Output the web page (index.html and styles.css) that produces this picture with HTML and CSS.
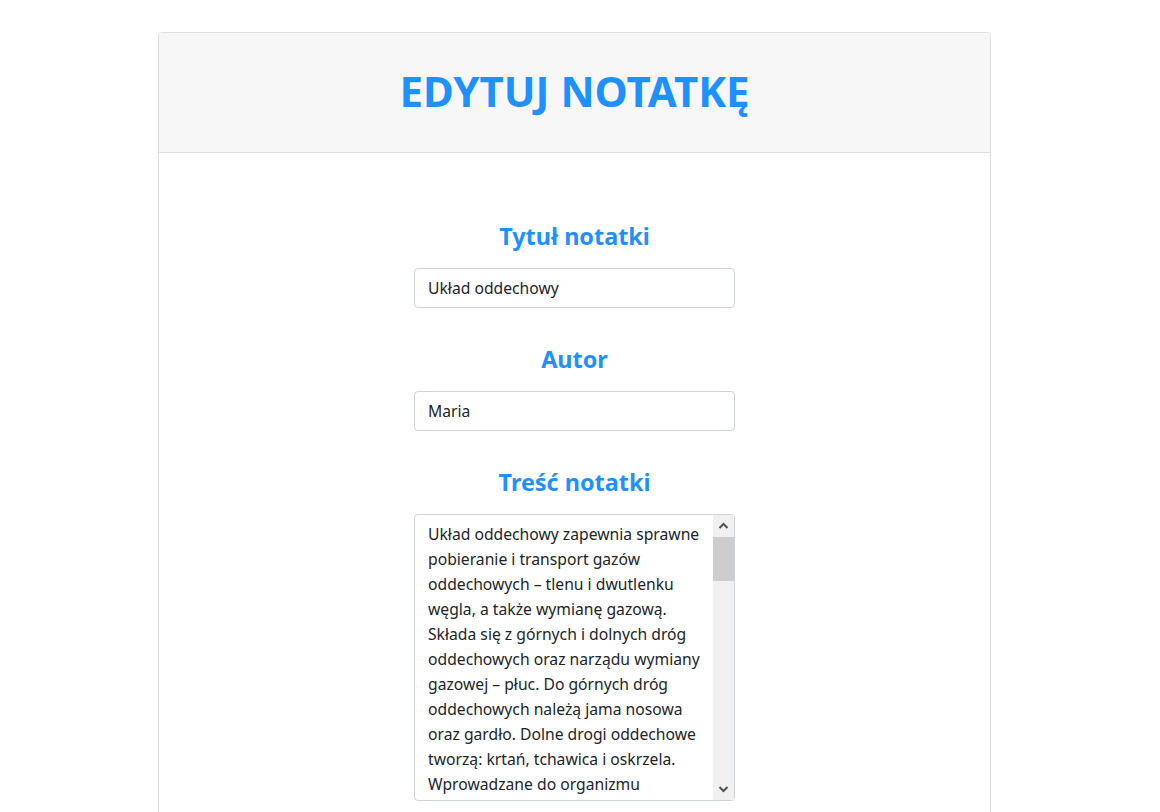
FILE: index.html
```html
<!DOCTYPE html>
<html lang="pl">
<head>
<meta charset="utf-8">
<title>Edytuj notatkę</title>
<link rel="stylesheet" href="styles.css">
</head>
<body>
<div class="page">
  <div class="card">
    <div class="card-header">
      <h1 class="title">EDYTUJ NOTATKĘ</h1>
    </div>
    <form class="card-body">
      <div class="group">
        <label class="label" for="title">Tytuł notatki</label>
        <input class="field" id="title" type="text" value="Układ oddechowy">
      </div>
      <div class="group">
        <label class="label" for="author">Autor</label>
        <input class="field" id="author" type="text" value="Maria">
      </div>
      <div class="group">
        <label class="label" for="content">Treść notatki</label>
        <div class="area-wrap">
          <textarea class="field area" id="content">Układ oddechowy zapewnia sprawne
pobieranie i transport gazów
oddechowych – tlenu i dwutlenku
węgla, a także wymianę gazową.
Składa się z górnych i dolnych dróg
oddechowych oraz narządu wymiany
gazowej – płuc. Do górnych dróg
oddechowych należą jama nosowa
oraz gardło. Dolne drogi oddechowe
tworzą: krtań, tchawica i oskrzela.
Wprowadzane do organizmu
powietrze jest w drogach oddechowych oczyszczane, ogrzewane i nawilżane. W jamie nosowej znajdują się włoski oraz nabłonek migawkowy, który wychwytuje drobiny kurzu i mikroorganizmy. Gardło jest wspólnym odcinkiem układu oddechowego i pokarmowego. Krtań zbudowana jest z chrząstek, a w jej wnętrzu znajdują się fałdy głosowe, dzięki którym możemy wydawać dźwięki. Wejście do krtani zamyka nagłośnia, która chroni drogi oddechowe przed dostaniem się do nich pokarmu podczas połykania. Tchawica to rura o długości około 10–12 cm, której ściany wzmocnione są chrzęstnymi półpierścieniami. Na wysokości piątego kręgu piersiowego tchawica dzieli się na dwa oskrzela główne – prawe i lewe. Oskrzela rozgałęziają się wewnątrz płuc na coraz drobniejsze oskrzeliki, które zakończone są pęcherzykami płucnymi. To właśnie w pęcherzykach płucnych zachodzi wymiana gazowa. Ściany pęcherzyków są bardzo cienkie i oplecione gęstą siecią naczyń włosowatych. Tlen dyfunduje z powietrza do krwi, a dwutlenek węgla przechodzi z krwi do powietrza w pęcherzykach. Płuca znajdują się w klatce piersiowej i otoczone są dwiema błonami – opłucną płucną i opłucną ścienną. Między nimi znajduje się jama opłucnej wypełniona niewielką ilością płynu, który zmniejsza tarcie podczas ruchów oddechowych. Prawe płuco składa się z trzech płatów, a lewe z dwóch. Wentylacja płuc polega na naprzemiennym wdechu i wydechu. Podczas wdechu przepona kurczy się i obniża, a mięśnie międzyżebrowe unoszą żebra, dzięki czemu objętość klatki piersiowej się zwiększa i powietrze napływa do płuc. Podczas wydechu mięśnie rozkurczają się, klatka piersiowa zmniejsza swoją objętość, a powietrze zostaje wypchnięte na zewnątrz.</textarea>
          <div class="scrollbar" aria-hidden="true">
            <div class="sb-btn">
              <svg width="21" height="22" viewBox="0 0 21 22"><path d="M6.5 13 L10.5 9 L14.5 13" fill="none" stroke="#505050" stroke-width="2"/></svg>
            </div>
            <div class="sb-thumb"></div>
            <div class="sb-track"></div>
            <div class="sb-btn">
              <svg width="21" height="22" viewBox="0 0 21 22"><path d="M6.5 9 L10.5 13 L14.5 9" fill="none" stroke="#505050" stroke-width="2"/></svg>
            </div>
          </div>
        </div>
      </div>
    </form>
  </div>
</div>
</body>
</html>
```

FILE: styles.css
```css
* {
  box-sizing: border-box;
}

html, body {
  margin: 0;
  padding: 0;
  background: #ffffff;
}

body {
  font-family: "Noto Sans", "Open Sans", sans-serif;
  color: #212529;
}

.page {
  padding-top: 32px;
  padding-left: 158px;
}

.card {
  width: 833px;
  border: 1px solid #dfdfdf;
  border-radius: 4px;
  background: #ffffff;
  min-height: 900px;
}

.card-header {
  background: #f7f7f7;
  border-bottom: 1px solid #dfdfdf;
  border-radius: 3px 3px 0 0;
  padding: 34px 20px 37px;
  text-align: center;
}

.title {
  margin: 0;
  font-size: 42px;
  line-height: 48px;
  font-weight: 700;
  color: #1e90ff;
}

.card-body {
  display: flex;
  flex-direction: column;
  align-items: center;
  gap: 37px;
  padding-top: 69px;
}

.group {
  display: flex;
  flex-direction: column;
  align-items: center;
  gap: 18px;
}

.label {
  font-size: 23.4px;
  line-height: 28px;
  font-weight: 700;
  color: #1e90ff;
}

.field {
  width: 321px;
  height: 40px;
  border: 1px solid #ced4da;
  border-radius: 4px;
  padding: 0 12px 0 13px;
  font-family: "Noto Sans", "Open Sans", sans-serif;
  font-size: 15.7px;
  color: #212529;
  background: #ffffff;
  outline: none;
}

.area-wrap {
  position: relative;
  width: 321px;
  height: 287px;
}

.area {
  display: block;
  height: 287px;
  padding: 7px 24px 7px 13px;
  line-height: 25px;
  resize: none;
  overflow: hidden;
}

.scrollbar {
  position: absolute;
  top: 1px;
  right: 1px;
  bottom: 1px;
  width: 21px;
  display: flex;
  flex-direction: column;
  background: #f0f0f0;
}

.sb-btn {
  height: 22px;
  flex: none;
  display: flex;
  align-items: center;
  justify-content: center;
}

.sb-btn svg {
  display: block;
}

.sb-thumb {
  height: 44px;
  flex: none;
  background: #cdcdcd;
}

.sb-track {
  flex: 1;
}
```
